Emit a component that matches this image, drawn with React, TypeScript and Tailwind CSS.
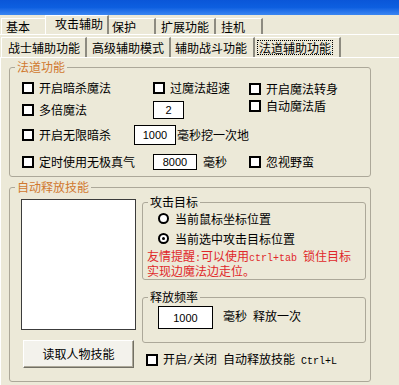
import React from 'react';

type Kids = { children?: React.ReactNode; className?: string };

const Mono = ({ children }: Kids) => (
  <span className="font-['Liberation_Mono',monospace] text-[10px]">{children}</span>
);

function Check({ children, className = '' }: Kids) {
  return (
    <div className={`flex items-center gap-[5px] whitespace-nowrap ${className}`}>
      <span className="w-[12px] h-[12px] shrink-0 border-2 border-black bg-white" />
      <span>{children}</span>
    </div>
  );
}

function Radio({ children, checked = false }: Kids & { checked?: boolean }) {
  return (
    <div className="flex items-center gap-[6px] h-[15px] whitespace-nowrap">
      <span className="w-[11px] h-[11px] shrink-0 rounded-full border-2 border-black bg-white flex items-center justify-center">
        {checked && <span className="w-[3px] h-[3px] rounded-full bg-black" />}
      </span>
      <span>{children}</span>
    </div>
  );
}

function Field({ children, className = '' }: Kids) {
  return (
    <div
      className={`shrink-0 bg-white border border-black flex items-center justify-center font-['Liberation_Sans',sans-serif] text-[11px] ${className}`}
    >
      {children}
    </div>
  );
}

function Group({ title, children, className = '', tone = 'text-[#d0782f]' }: Kids & { title: string; tone?: string }) {
  return (
    <fieldset className={`border border-[#aca899] rounded-[3px] ${className}`}>
      <legend className={`ml-[5px] px-[2px] leading-[14px] ${tone}`}>{title}</legend>
      {children}
    </fieldset>
  );
}

function OuterTab({ children, className = '' }: Kids) {
  return (
    <div className={`flex items-center border-t border-white whitespace-nowrap ${className}`}>{children}</div>
  );
}

function InnerTab({ children, className = '' }: Kids) {
  return (
    <div className={`h-[20px] flex items-center border-t border-white border-r-2 border-r-[#8d8b80] whitespace-nowrap ${className}`}>
      {children}
    </div>
  );
}

export default function App() {
  return (
    <div className="w-[399px] h-[385px] overflow-hidden bg-[#ece9d8] text-black text-[12px] leading-[14px] font-['Noto_Sans_CJK_SC','Noto_Sans_CJK_JP',sans-serif]">
      <div className="h-[15px] bg-linear-to-b from-[#0a56d8] via-[#0d5fe0] to-[#3a86f2]" />

      {/* outer tabs */}
      <div className="h-[19px] flex items-end pl-[1px]">
        <OuterTab className="w-[44px] h-[16px] pl-[4px] border-l border-l-white">基本</OuterTab>
        <OuterTab className="w-[64px] h-[19px] pl-[9px] pb-[2px] border-l border-l-white border-r-2 border-r-[#8d8b80]">攻击辅助</OuterTab>
        <OuterTab className="w-[47px] h-[16px] pl-[3px] border-r-2 border-r-[#8d8b80]">保护</OuterTab>
        <OuterTab className="w-[60px] h-[16px] pl-[5px] border-r-2 border-r-[#8d8b80]">扩展功能</OuterTab>
        <OuterTab className="w-[47px] h-[16px] pl-[5px] border-r-2 border-r-[#8d8b80]">挂机</OuterTab>
      </div>

      {/* inner tabs */}
      <div className="h-[23px] border-t border-white flex items-end pl-[1px]">
        <InnerTab className="w-[86px] pl-[6px] border-l border-l-white">战士辅助功能</InnerTab>
        <InnerTab className="w-[84px] pl-[5px]">高级辅助模式</InnerTab>
        <InnerTab className="w-[84px] pl-[4px]">辅助战斗功能</InnerTab>
        <InnerTab className="w-[86px] pl-[2px]">
          <span className="px-[1px] h-[15px] flex items-center border border-dotted border-black">法道辅助功能</span>
        </InnerTab>
      </div>

      {/* panel */}
      <div className="border-t border-l border-white pt-[2px] pl-[8px] h-[328px]">
        <Group title="法道功能" className="w-[362px] h-[117px]">
          <div className="flex pl-[12px] pt-[5px]">
            <div className="w-[227px] flex flex-col">
              <div className="h-[18px] flex items-center">
                <Check className="w-[131px]">开启暗杀魔法</Check>
                <Check>过魔法超速</Check>
              </div>
              <div className="h-[18px] mt-[4px] flex items-center">
                <Check className="w-[131px]">多倍魔法</Check>
                <Field className="w-[31px] h-[18px]">2</Field>
              </div>
              <div className="h-[20px] mt-[6px] flex items-center">
                <Check className="w-[131px]">开启无限暗杀</Check>
                <Field className="w-[42px] h-[20px]">1000</Field>
                <span className="ml-[1px] whitespace-nowrap">毫秒挖一次地</span>
              </div>
              <div className="h-[18px] mt-[8px] flex items-center">
                <Check className="w-[131px]">定时使用无极真气</Check>
                <Field className="w-[44px] h-[16px]">8000</Field>
                <span className="ml-[6px] whitespace-nowrap">毫秒</span>
              </div>
            </div>
            <div className="flex flex-col">
              <Check className="h-[17px] mt-[1px]">开启魔法转身</Check>
              <Check className="h-[17px]">自动魔法盾</Check>
              <Check className="h-[17px] mt-[39px]">忽视野蛮</Check>
            </div>
          </div>
        </Group>

        <Group title="自动释放技能" className="w-[362px] h-[202px] mt-[3px]">
          <div className="flex">
            <div className="flex flex-col pl-[11px] pt-[5px]">
              <div className="w-[115px] h-[131px] bg-white border border-[#3c3c3c]" />
              <div className="ml-[2px] mt-[10px] w-[111px] h-[28px] flex items-center justify-center bg-[#f3f2ec] border border-t-white border-l-white border-r-[#716f64] border-b-[#716f64] shadow-[inset_-1px_-1px_0_#aca899]">
                读取人物技能
              </div>
            </div>
            <div className="ml-[6px] pt-[1px] w-[224px] flex flex-col">
              <Group title="攻击目标" tone="text-black" className="h-[85px]">
                <div className="flex flex-col pl-[15px] pt-[2px] gap-[5px]">
                  <Radio>当前鼠标坐标位置</Radio>
                  <Radio checked>当前选中攻击目标位置</Radio>
                </div>
                <div className="mt-[4px] pl-[4px] leading-[12px] text-[#e0282a] whitespace-nowrap">
                  <div>
                    友情提醒<Mono>:</Mono>可以使用<Mono>ctrl+tab </Mono>锁住目标
                  </div>
                  <div>实现边魔法边走位。</div>
                </div>
              </Group>
              <Group title="释放频率" tone="text-black" className="h-[53px] mt-[10px]">
                <div className="flex items-center pl-[15px] mt-[2px]">
                  <Field className="w-[55px] h-[23px]">1000</Field>
                  <span className="ml-[10px] whitespace-nowrap">
                    毫秒<Mono> </Mono>释放一次
                  </span>
                </div>
              </Group>
              <Check className="ml-[4px] mt-[10px] h-[14px]">
                开启<Mono>/</Mono>关闭<Mono> </Mono>自动释放技能<Mono> Ctrl+L</Mono>
              </Check>
            </div>
          </div>
        </Group>
      </div>

      <div className="flex h-[3px]">
        <div className="w-[220px] border-t border-[#aca899] border-r border-r-white" />
        <div className="w-[80px] ml-[2px] border-t border-[#aca899] border-r border-r-white" />
        <div className="flex-1 ml-[2px] border-t border-[#aca899]" />
      </div>
    </div>
  );
}
